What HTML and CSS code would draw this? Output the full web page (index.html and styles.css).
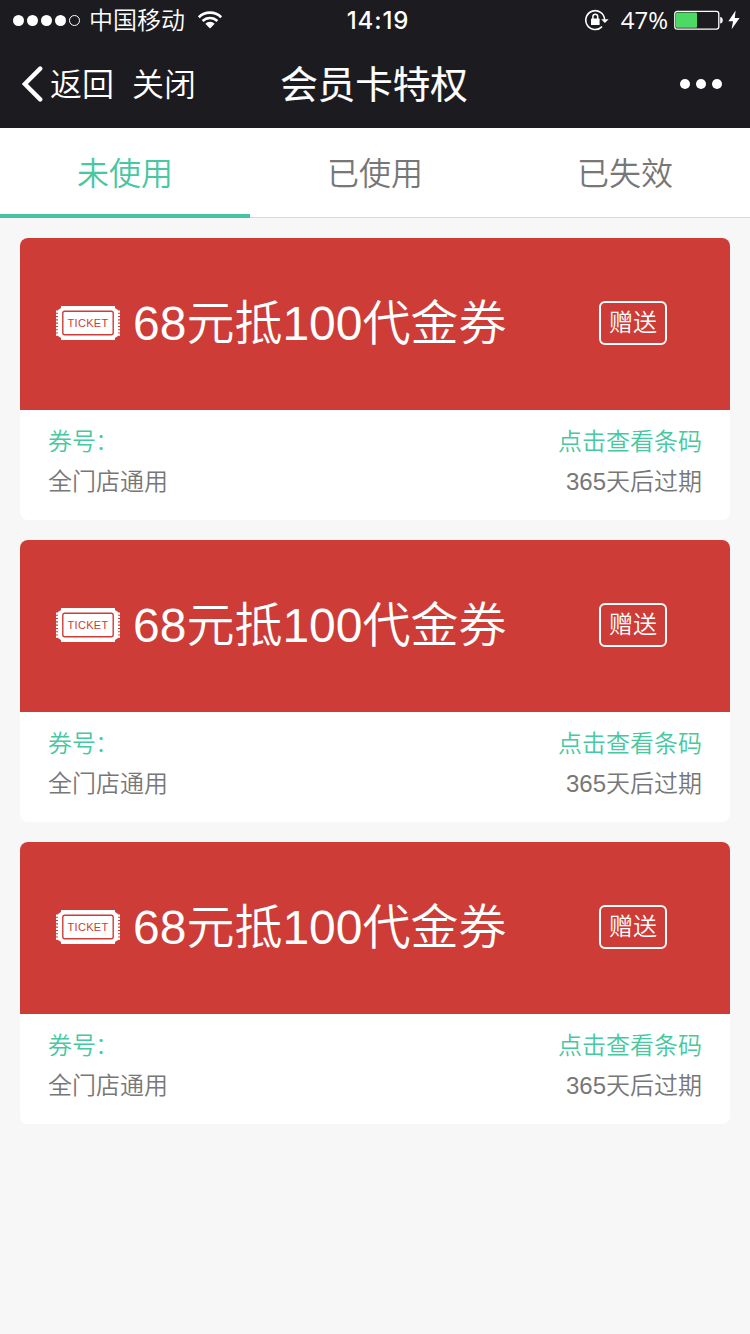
FILE: index.html
```html
<!DOCTYPE html>
<html lang="zh-CN">
<head>
    <meta charset="UTF-8">
    <meta name="viewport" content="width=device-width, initial-scale=1.0">
    <title>会员卡特权</title>
    <link rel="stylesheet" href="styles.css">
</head>
<body>
    <!-- 头部 -->
    <header class="header">
        <div class="status-bar">
            <div class="status-left">
                <div class="signal"><i></i><i></i><i></i><i></i><i class="empty"></i></div>
                <span class="carrier">中国移动</span>
                <svg class="wifi" width="26" height="20" viewBox="0 0 26 20">
                    <path d="M1.8 7.2A16 16 0 0 1 24.2 7.2M5.6 11A10.6 10.6 0 0 1 20.4 11" fill="none" stroke="#fff" stroke-width="2.6"/>
                    <path d="M8.3 13.8A6.6 6.6 0 0 1 17.7 13.8L13 18.6Z" fill="#fff"/>
                </svg>
            </div>
            <span class="time">14:19</span>
            <div class="status-right">
                <svg class="lock" width="24" height="22" viewBox="0 0 24 22">
                    <path d="M17 17.6A9.4 9.4 0 1 1 19.6 10.6" fill="none" stroke="#fff" stroke-width="1.6"/>
                    <path d="M16.2 10.2H23.6L19.9 14Z" fill="#fff"/>
                    <rect x="6" y="9.6" width="8.6" height="6.4" rx=".6" fill="#fff"/>
                    <path d="M7.9 10V7.6A2.4 2.4 0 0 1 12.7 7.6V10" fill="none" stroke="#fff" stroke-width="1.5"/>
                </svg>
                <span class="percent">47%</span>
                <svg class="battery" width="49" height="20" viewBox="0 0 49 20">
                    <rect x=".8" y="1.3" width="44" height="17.8" rx="2.4" fill="none" stroke="#fff" stroke-width="1.3"/>
                    <rect x="2" y="2.6" width="21" height="15.2" rx="1" fill="#4cd964"/>
                    <path d="M46.2 7C49.6 7.2 49.6 13.4 46.2 13.6Z" fill="#fff"/>
                </svg>
                <svg class="bolt" width="12" height="20" viewBox="0 0 12 20">
                    <path d="M7.6 .6L.4 11.2H5L3.6 19.2L11.6 8H6.8Z" fill="#fff"/>
                </svg>
            </div>
        </div>
        <nav class="nav-bar">
            <div class="nav-left">
                <svg class="back" width="21" height="36" viewBox="0 0 21 36">
                    <path d="M18.2 2.6L2.8 18L18.2 33.4" fill="none" stroke="#fff" stroke-width="4.4" stroke-linecap="round"/>
                </svg>
                <a>返回</a>
                <a class="close">关闭</a>
            </div>
            <h1 class="title">会员卡特权</h1>
            <div class="more"><i></i><i></i><i></i></div>
        </nav>
    </header>

    <!-- 选项卡 -->
    <div class="tabs">
        <div class="tab active">未使用</div>
        <div class="tab">已使用</div>
        <div class="tab">已失效</div>
    </div>

    <!-- 券列表 -->
    <main class="list">
        <section class="card">
            <div class="card-top">
                <svg class="ticket" viewBox="0 0 64 34">
                    <path d="M5 0H59V2L62 4V30L59 32V34H5V32L2 30V4L5 2Z" fill="#fff"/>
                    <path d="M1.4 4.5V30M62.6 4.5V30" stroke="#fff" stroke-width="2.8" stroke-dasharray="2.2 1.1"/>
                    <rect x="6.8" y="5.3" width="50.4" height="23.4" rx="2" fill="none" stroke="#cd3c37" stroke-width="1.4"/>
                    <text x="32" y="21" text-anchor="middle" class="ticket-text">TICKET</text>
                </svg>
                <h2 class="card-name">68元抵100代金券</h2>
                <span class="give">赠送</span>
            </div>
            <div class="card-info">
                <p class="green"><span>券号<span class="colon">：</span></span><span>点击查看条码</span></p>
                <p><span>全门店通用</span><span>365天后过期</span></p>
            </div>
        </section>

        <section class="card">
            <div class="card-top">
                <svg class="ticket" viewBox="0 0 64 34">
                    <path d="M5 0H59V2L62 4V30L59 32V34H5V32L2 30V4L5 2Z" fill="#fff"/>
                    <path d="M1.4 4.5V30M62.6 4.5V30" stroke="#fff" stroke-width="2.8" stroke-dasharray="2.2 1.1"/>
                    <rect x="6.8" y="5.3" width="50.4" height="23.4" rx="2" fill="none" stroke="#cd3c37" stroke-width="1.4"/>
                    <text x="32" y="21" text-anchor="middle" class="ticket-text">TICKET</text>
                </svg>
                <h2 class="card-name">68元抵100代金券</h2>
                <span class="give">赠送</span>
            </div>
            <div class="card-info">
                <p class="green"><span>券号<span class="colon">：</span></span><span>点击查看条码</span></p>
                <p><span>全门店通用</span><span>365天后过期</span></p>
            </div>
        </section>

        <section class="card">
            <div class="card-top">
                <svg class="ticket" viewBox="0 0 64 34">
                    <path d="M5 0H59V2L62 4V30L59 32V34H5V32L2 30V4L5 2Z" fill="#fff"/>
                    <path d="M1.4 4.5V30M62.6 4.5V30" stroke="#fff" stroke-width="2.8" stroke-dasharray="2.2 1.1"/>
                    <rect x="6.8" y="5.3" width="50.4" height="23.4" rx="2" fill="none" stroke="#cd3c37" stroke-width="1.4"/>
                    <text x="32" y="21" text-anchor="middle" class="ticket-text">TICKET</text>
                </svg>
                <h2 class="card-name">68元抵100代金券</h2>
                <span class="give">赠送</span>
            </div>
            <div class="card-info">
                <p class="green"><span>券号<span class="colon">：</span></span><span>点击查看条码</span></p>
                <p><span>全门店通用</span><span>365天后过期</span></p>
            </div>
        </section>
    </main>
</body>
</html>
```
FILE: styles.css
```css
* {
    margin: 0;
    padding: 0;
    box-sizing: border-box;
}

body {
    min-height: 1334px;
    font-family: "Liberation Sans", "Noto Sans CJK SC", sans-serif;
    font-weight: 350;
    background: #f7f7f8;
    color: #777;
}

svg {
    display: block;
    flex-shrink: 0;
}

/* 头部 */
.header {
    height: 128px;
    background: #1c1b20;
    color: #fff;
}

.status-bar,
.nav-bar {
    display: grid;
    grid-template-columns: 1fr auto 1fr;
    align-items: center;
}

.status-bar {
    height: 40px;
    padding: 0 10px 0 13px;
    font-size: 24px;
    line-height: 40px;
}

.status-left,
.status-right,
.nav-left,
.signal,
.more {
    display: flex;
    align-items: center;
}

.signal {
    gap: 3px;
}

.signal i {
    width: 11px;
    height: 11px;
    border-radius: 50%;
    background: #fff;
}

.signal .empty {
    background: none;
    border: 1px solid #fff;
}

.carrier {
    margin: 0 12px 0 9px;
    padding-top: 2px;
    line-height: 38px;
}

.time {
    padding: 2px 0 0 3px;
    font-family: Inter, sans-serif;
    font-size: 24px;
    font-weight: 500;
    letter-spacing: 0.9px;
    line-height: 38px;
}

.status-right {
    justify-content: flex-end;
}

.percent {
    margin: 0 6px 0 12px;
    font-family: "Open Sans", sans-serif;
    font-weight: 400;
    line-height: 40px;
}

.bolt {
    margin-left: 5px;
}

.nav-bar {
    height: 88px;
    padding: 0 28px 0 22px;
    font-size: 32px;
}

.nav-left a {
    padding-top: 2px;
    line-height: 44px;
}

.back {
    margin-right: 7px;
}

.nav-left .close {
    margin-left: 18px;
}

.title {
    padding: 0 0 5px 4px;
    font-size: 37.5px;
    font-weight: 400;
    -webkit-text-stroke: 0.2px #fff;
}

.more {
    justify-content: flex-end;
    gap: 5.5px;
}

.more i {
    width: 10.5px;
    height: 10.5px;
    border-radius: 50%;
    background: #fff;
}

/* 选项卡 */
.tabs {
    display: flex;
    height: 90px;
    background: #fff;
}

.tab {
    flex: 1;
    border-bottom: 1px solid #d9d9db;
    font-size: 32px;
    line-height: 92px;
    text-align: center;
}

.tab.active {
    border-bottom: 4px solid #46c3a0;
    color: #46c8a0;
}

/* 券列表 */
.list {
    display: flex;
    flex-direction: column;
    gap: 20px;
    padding: 20px;
}

.card {
    height: 282px;
    border-radius: 8px;
    background: #fff;
    overflow: hidden;
}

.card-top {
    display: flex;
    align-items: center;
    height: 172px;
    padding: 0 63px 2px 36px;
    background: #cd3c37;
    color: #fff;
}

.ticket {
    width: 64px;
    height: 34px;
}

.ticket-text {
    font-family: "Liberation Sans", sans-serif;
    font-size: 11px;
    font-weight: 400;
    letter-spacing: 0.3px;
    fill: #cd3c37;
}

.card-name {
    margin-left: 13px;
    padding-bottom: 8px;
    font-size: 48px;
    font-weight: 350;
    white-space: nowrap;
}

.give {
    width: 68px;
    height: 44px;
    margin-left: auto;
    border: 2px solid #fff;
    border-radius: 6px;
    font-size: 24px;
    line-height: 40px;
    text-align: center;
}

.card-info {
    padding: 12px 28px;
    font-size: 24px;
    line-height: 40px;
}

.card-info p {
    display: flex;
    justify-content: space-between;
}

.card-info .green {
    color: #46c8a0;
}

.colon {
    margin-left: -1px;
    font-weight: 300;
}
```
